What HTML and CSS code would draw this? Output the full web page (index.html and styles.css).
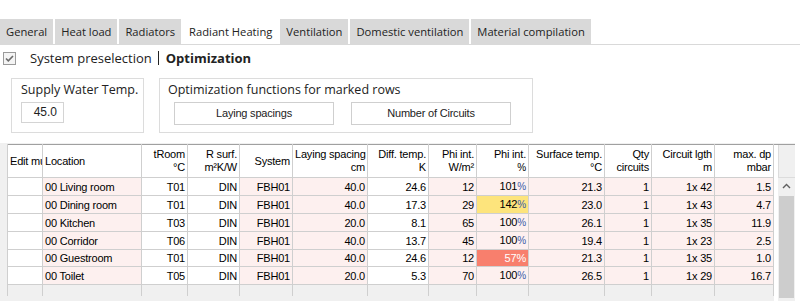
FILE: index.html
```html
<!DOCTYPE html>
<html>
<head>
<meta charset="utf-8">
<link rel="stylesheet" href="styles.css">
</head>
<body>
<div class="tabs">
  <div class="tab">General</div>
  <div class="tab">Heat load</div>
  <div class="tab">Radiators</div>
  <div class="tab active">Radiant Heating</div>
  <div class="tab">Ventilation</div>
  <div class="tab">Domestic ventilation</div>
  <div class="tab">Material compilation</div>
</div>
<div class="toolbar">
  <svg class="check" width="13" height="13" viewBox="0 0 13 13"><rect x="0.5" y="0.5" width="12" height="12" fill="#f4f4f4" stroke="#9a9a9a"/><path d="M3 6.5 L5.3 8.8 L10 4" fill="none" stroke="#6a6a6a" stroke-width="1.6"/></svg>
  <span class="sysname">System preselection</span>
  <span class="sep"></span>
  <span class="opt">Optimization</span>
</div>
<div class="groups">
  <div class="group g1">
    <div class="gtitle">Supply Water Temp.</div>
    <div class="input">45.0</div>
  </div>
  <div class="group g2">
    <div class="gtitle">Optimization functions for marked rows</div>
    <div class="btnrow">
      <div class="btn">Laying spacings</div>
      <div class="btn">Number of Circuits</div>
    </div>
  </div>
</div>
<div class="gridwrap">
  <table class="grid">
    <colgroup>
      <col class="c1"><col class="c2"><col class="c3"><col class="c4"><col class="c5"><col class="c6"><col class="c7"><col class="c8"><col class="c9"><col class="c10"><col class="c11"><col class="c12"><col class="c13">
    </colgroup>
    <thead>
      <tr>
        <th class="l"><div class="clipbox">Edit mu</div></th>
        <th class="l">Location</th>
        <th>tRoom<br>°C</th>
        <th>R surf.<br>m²K/W</th>
        <th>System</th>
        <th>Laying spacing<br>cm</th>
        <th>Diff. temp.<br>K</th>
        <th>Phi int.<br>W/m²</th>
        <th>Phi int.<br><span class="pcth">%</span></th>
        <th>Surface temp.<br>°C</th>
        <th>Qty<br>circuits</th>
        <th>Circuit lgth<br>m</th>
        <th>max. dp<br>mbar</th>
      </tr>
    </thead>
    <tbody>
      <tr><td class="w"></td><td class="l">00 Living room</td><td class="w">T01</td><td class="w">DIN</td><td>FBH01</td><td>40.0</td><td class="w">24.6</td><td>12</td><td>101<span class="pct">%</span></td><td>21.3</td><td>1</td><td>1x 42</td><td>1.5</td></tr>
      <tr><td class="w"></td><td class="l">00 Dining room</td><td class="w">T01</td><td class="w">DIN</td><td>FBH01</td><td>40.0</td><td class="w">17.3</td><td>29</td><td class="hi">142<span class="pct">%</span></td><td>23.0</td><td>1</td><td>1x 43</td><td>4.7</td></tr>
      <tr><td class="w"></td><td class="l">00 Kitchen</td><td class="w">T03</td><td class="w">DIN</td><td>FBH01</td><td>20.0</td><td class="w">8.1</td><td>65</td><td>100<span class="pct">%</span></td><td>26.1</td><td>1</td><td>1x 35</td><td>11.9</td></tr>
      <tr><td class="w"></td><td class="l">00 Corridor</td><td class="w">T06</td><td class="w">DIN</td><td>FBH01</td><td>40.0</td><td class="w">13.7</td><td>45</td><td>100<span class="pct">%</span></td><td>19.4</td><td>1</td><td>1x 23</td><td>2.5</td></tr>
      <tr><td class="w"></td><td class="l">00 Guestroom</td><td class="w">T01</td><td class="w">DIN</td><td>FBH01</td><td>40.0</td><td class="w">24.6</td><td>12</td><td class="lo">57%</td><td>21.3</td><td>1</td><td>1x 35</td><td>1.0</td></tr>
      <tr><td class="w"></td><td class="l">00 Toilet</td><td class="w">T05</td><td class="w">DIN</td><td>FBH01</td><td>20.0</td><td class="w">5.3</td><td>70</td><td>100<span class="pct">%</span></td><td>26.5</td><td>1</td><td>1x 29</td><td>16.7</td></tr>
      <tr class="empty"><td></td><td></td><td></td><td></td><td></td><td></td><td></td><td></td><td></td><td></td><td></td><td></td><td></td></tr>
    </tbody>
  </table>
  <div class="vscroll">
    <div class="corner"></div>
    <div class="bar">
      <svg class="arrow" width="17" height="17" viewBox="0 0 17 17"><path d="M5 10 L8.5 6.5 L12 10" fill="none" stroke="#606060" stroke-width="1.4"/></svg>
      <div class="thumb"></div>
    </div>
  </div>
</div>
</body>
</html>
```
FILE: styles.css
```css
html, body {
  margin: 0;
  padding: 0;
  background: #fff;
  width: 800px;
  height: 301px;
  overflow: hidden;
}
body {
  font-family: "Open Sans", "Noto Sans", sans-serif;
  color: #1e1e1e;
}
.tabs {
  display: flex;
  margin-top: 19px;
  height: 25px;
  border-bottom: 1px solid #d9d9d9;
  gap: 2px;
}
.tab {
  background: #d9d9d9;
  font-size: 11.2px;
  line-height: 25px;
  padding: 0 6px;
  color: #222;
  white-space: nowrap;
}
.tab.active {
  background: #fff;
}
.toolbar {
  display: flex;
  align-items: center;
  height: 20px;
  margin-top: 3px;
  padding-left: 3px;
}
.check {
  display: block;
}
.sysname {
  font-size: 13px;
  margin-left: 14px;
  color: #222;
}
.sep {
  width: 1px;
  height: 14px;
  background: #222;
  margin-left: 6px;
  margin-right: 7px;
}
.opt {
  font-size: 13px;
  font-weight: 700;
  color: #222;
}
.groups {
  display: flex;
  margin-top: 10px;
  padding-left: 11px;
  gap: 15px;
}
.group {
  border: 1px solid #dcdcdc;
}
.g1 {
  width: 133px;
  padding-left: 9px;
  box-sizing: border-box;
  height: 55px;
}
.g2 {
  width: 374px;
  box-sizing: border-box;
  height: 55px;
  padding-left: 8px;
}
.gtitle {
  font-size: 12.5px;
  line-height: 17px;
  margin-top: 2px;
  color: #222;
  white-space: nowrap;
}
.input {
  margin-top: 4px;
  width: 43px;
  height: 21px;
  box-sizing: border-box;
  border: 1px solid #d4d4d4;
  font-family: "Liberation Sans", Arial, sans-serif;
  font-size: 12px;
  line-height: 19px;
  text-align: right;
  padding-right: 6px;
}
.btnrow {
  display: flex;
  gap: 17px;
  margin-top: 4px;
  padding-left: 6px;
}
.btn {
  width: 160px;
  height: 23px;
  box-sizing: border-box;
  border: 1px solid #cfcfcf;
  text-align: center;
  font-family: "Liberation Sans", Arial, sans-serif;
  font-size: 11px;
  line-height: 21px;
  color: #222;
  letter-spacing: -0.2px;
}
.gridwrap {
  display: flex;
  align-items: flex-start;
  margin-top: 10px;
  width: 795px;
  height: 158px;
  background: #f0f0f0;
  padding-left: 7px;
  padding-top: 1px;
  box-sizing: border-box;
}
.grid {
  border-collapse: collapse;
  table-layout: fixed;
  width: 767px;
  font-family: "Liberation Sans", Arial, sans-serif;
  font-size: 11px;
  letter-spacing: -0.2px;
  color: #000;
  border-top: 1px solid #a0a0a0;
  border-left: 1px solid #a0a0a0;
}
.c1 { width: 35px; }
.c2 { width: 99px; }
.c3 { width: 46px; }
.c4 { width: 52px; }
.c5 { width: 53px; }
.c6 { width: 75px; }
.c7 { width: 61px; }
.c8 { width: 48px; }
.c9 { width: 52px; }
.c10 { width: 76px; }
.c11 { width: 47px; }
.c12 { width: 63px; }
.c13 { width: 59px; }
.grid th {
  height: 32px;
  background: #fff;
  font-weight: normal;
  text-align: right;
  vertical-align: middle;
  line-height: 13px;
  padding: 0 2px;
  border: 1px solid #cfcfcf;
  border-top: none;
  white-space: nowrap;
  overflow: hidden;
}
.grid th.l {
  text-align: left;
}
.clipbox {
  width: 33px;
  overflow: hidden;
  white-space: nowrap;
}
.grid td {
  height: 16px;
  padding: 0 2px;
  text-align: right;
  background: #fdf0ef;
  border: 1px solid #cfcfcf;
  line-height: 16px;
  white-space: nowrap;
  overflow: hidden;
}
.grid td.l {
  text-align: left;
}
.grid td.w {
  background: #fff;
}
.grid td.hi {
  background: #fde47c;
}
.grid td.lo {
  background: #f87f6d;
  color: #fff;
}
.pct, .pcth {
  color: #3b5ba8;
  font-size: 10px;
}
.pcth {
  color: #000;
}
.grid tr.empty td {
  background: #f0f0f0;
  height: 11px;
  border-bottom: none;
}
.vscroll {
  display: flex;
  flex-direction: column;
  width: 22px;
  height: 157px;
  background: #fff;
  padding-left: 4px;
  box-sizing: border-box;
  border-top: 1px solid #a0a0a0;
}
.corner {
  height: 32px;
  background: #f0f0f0;
  border-left: 1px solid #dcdcdc;
  border-bottom: 1px solid #dcdcdc;
}
.bar {
  flex: 1;
  background: #f0f0f0;
  display: flex;
  flex-direction: column;
  align-items: center;
}
.arrow {
  display: block;
}
.thumb {
  width: 15px;
  flex: 1;
  background: #cdcdcd;
  margin-top: 1px;
  margin-bottom: 3px;
}
```
